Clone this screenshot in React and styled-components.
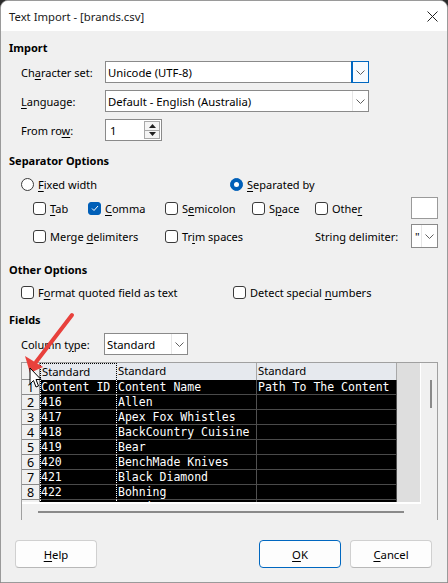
import React from "react";
import styled, { createGlobalStyle } from "styled-components";

const GlobalStyle = createGlobalStyle`
  html, body {
    margin: 0;
    padding: 0;
    background: #2b2b2b;
  }
  * { box-sizing: border-box; }
`;

const UI = `"Noto Sans", "Liberation Sans", sans-serif`;
const MONO = `"DejaVu Sans Mono", "Liberation Mono", monospace`;

const Window = styled.div`
  position: relative;
  width: 448px;
  height: 583px;
  background: #f0f0f0;
  border: 1px solid #9a9a9a;
  border-radius: 8px 8px 0 0;
  overflow: hidden;
  font-family: ${UI};
  font-size: 11px;
  color: #000;
  display: flex;
  flex-direction: column;
`;

const TitleBar = styled.div`
  height: 30px;
  background: #fff;
  display: flex;
  align-items: center;
  justify-content: space-between;
  padding: 0 9px 0 8px;
  font-size: 11.3px;
  color: #1a1a1a;
`;

const Body = styled.div`
  flex: 1;
  display: flex;
  flex-direction: column;
  padding: 0 9px 0 8px;
`;

const SectionTitle = styled.div`
  height: 20px;
  line-height: 20px;
  font-weight: bold;
  margin-top: ${(p) => p.$top || 0}px;
`;

const Indent = styled.div`
  padding-left: ${(p) => p.$left || 12}px;
  margin-top: ${(p) => p.$top || 0}px;
`;

const FormRow = styled.div`
  display: flex;
  align-items: center;
  height: 22px;
  margin-top: ${(p) => p.$top || 0}px;
`;

const Label = styled.span`
  width: ${(p) => p.$w || 84}px;
  flex-shrink: 0;
  white-space: nowrap;
`;

const Mn = styled.span`
  text-decoration: underline;
  text-underline-offset: 2px;
`;

const Combo = styled.div`
  width: ${(p) => p.$w}px;
  height: ${(p) => p.$h || 22}px;
  background: #fff;
  border: 1px solid #8a8a8a;
  display: flex;
  align-items: stretch;
`;

const ComboText = styled.div`
  flex: 1;
  padding-left: ${(p) => p.$pad ?? 2}px;
  display: flex;
  align-items: center;
  white-space: nowrap;
  overflow: hidden;
  font-size: 11.3px;
`;

const DropButton = styled.div`
  width: 16px;
  display: flex;
  align-items: center;
  justify-content: center;
  border-left: 1px solid ${(p) => (p.$focused ? "#0067c0" : "#e6e6e6")};
  outline: ${(p) => (p.$focused ? "1px solid #0067c0" : "none")};
  background: ${(p) => (p.$focused ? "#f7fbff" : "#fff")};
`;

const Chevron = () => (
  <svg width="9" height="5" viewBox="0 0 9 5">
    <path d="M0.5 0.5 L4.5 4.5 L8.5 0.5" fill="none" stroke="#606060" strokeWidth="1" />
  </svg>
);

const SpinBox = styled.div`
  width: 57px;
  height: 22px;
  background: #fff;
  border: 1px solid #8a8a8a;
  display: flex;
`;

const SpinButtons = styled.div`
  width: 16px;
  margin: 1px 1px 1px 0;
  display: flex;
  flex-direction: column;
`;

const SpinHalf = styled.div`
  flex: 1;
  border: 1px solid #a8a8a8;
  border-top-width: ${(p) => (p.$down ? 0 : 1)}px;
  background: #f4f4f4;
  display: flex;
  align-items: center;
  justify-content: center;
`;

const Tri = ({ down }) => (
  <svg width="7" height="4" viewBox="0 0 7 4">
    <path d={down ? "M0 0 L7 0 L3.5 4 Z" : "M0 4 L7 4 L3.5 0 Z"} fill="#202020" />
  </svg>
);

const Grid = styled.div`
  display: grid;
  grid-template-columns: ${(p) => p.$cols};
  align-items: center;
  height: ${(p) => p.$h || 20}px;
  margin-top: ${(p) => p.$top || 0}px;
  padding-left: ${(p) => p.$left || 0}px;
`;

const Option = styled.label`
  display: flex;
  align-items: center;
  gap: 4px;
  white-space: nowrap;
`;

const Box = styled.span`
  width: 13px;
  height: 13px;
  border-radius: 3px;
  border: 1px solid ${(p) => (p.$checked ? "#005fb8" : "#3a3a3a")};
  background: ${(p) => (p.$checked ? "#005fb8" : "#fff")};
  display: inline-flex;
  align-items: center;
  justify-content: center;
  flex-shrink: 0;
`;

const Round = styled.span`
  width: 13px;
  height: 13px;
  border-radius: 50%;
  border: 1px solid ${(p) => (p.$checked ? "#005fb8" : "#3a3a3a")};
  background: ${(p) => (p.$checked ? "#005fb8" : "#fff")};
  display: inline-flex;
  align-items: center;
  justify-content: center;
  flex-shrink: 0;
  &::after {
    content: "";
    display: ${(p) => (p.$checked ? "block" : "none")};
    width: 5px;
    height: 5px;
    border-radius: 50%;
    background: #fff;
  }
`;

const Check = ({ checked, children }) => (
  <Option>
    <Box $checked={checked}>
      {checked && (
        <svg width="8" height="7" viewBox="0 0 8 7">
          <path d="M1 3.5 L3 5.5 L7 1" fill="none" stroke="#fff" strokeWidth="1" />
        </svg>
      )}
    </Box>
    <span>{children}</span>
  </Option>
);

const Radio = ({ checked, children }) => (
  <Option>
    <Round $checked={checked} />
    <span>{children}</span>
  </Option>
);

const Entry = styled.div`
  width: 27px;
  height: ${(p) => p.$h || 22}px;
  background: #fff;
  border: 1px solid #9a9a9a;
`;

/* preview grid */
const PreviewFrame = styled.div`
  margin: 7px 0 0 12px;
  width: 417px;
  height: 158px;
  border: 1px solid #a0a0a0;
  border-bottom: none;
  display: flex;
  flex-direction: column;
`;

const PreviewTop = styled.div`
  display: flex;
  height: 141px;
`;

const Viewport = styled.div`
  width: 399px;
  background: #dedede;
  border-right: 1px solid #fff;
  border-bottom: 2px solid #fff;
  overflow: hidden;
`;

const VScroll = styled.div`
  flex: 1;
  display: flex;
  justify-content: center;
  padding-top: 17px;
`;

const VThumb = styled.div`
  width: 2px;
  height: 28px;
  background: #8a8a8a;
  margin-left: 3px;
`;

const HScroll = styled.div`
  flex: 1;
  padding: 7px 0 0 16px;
`;

const HThumb = styled.div`
  width: 366px;
  height: 2px;
  background: #8a8a8a;
`;

const Table = styled.div`
  display: grid;
  grid-template-columns: 18px 77px 140px 140px;
  grid-auto-rows: 15px;
  grid-template-rows: 17px;
  width: 375px;
`;

const Corner = styled.div`
  background: #f0f0f0;
  border-right: 1px solid #8a8a8a;
  border-bottom: 1px solid #8a8a8a;
`;

const RowNum = styled.div`
  background: #f0f0f0;
  border-right: 1px solid #8a8a8a;
  border-bottom: 1px solid #8a8a8a;
  font-size: 12.5px;
  line-height: 14px;
  padding-top: 1px;
  text-align: center;
  overflow: hidden;
`;

const HeadCell = styled.div`
  background: #e6e9ee;
  border-top: ${(p) => (p.$focus ? "1px dotted #000" : "none")};
  border-left: ${(p) => (p.$focus ? "1px dotted #000" : "none")};
  border-right: 1px ${(p) => (p.$focus ? "dotted #000" : "solid #a8a8a8")};
  padding-left: 1px;
  font-size: 11.3px;
  line-height: 16px;
  white-space: nowrap;
  overflow: hidden;
`;

const DataCell = styled.div`
  background: #000;
  color: #fff;
  font-family: ${MONO};
  font-size: 11.5px;
  line-height: 14px;
  white-space: nowrap;
  overflow: hidden;
  border-bottom: 1px solid #4a4a4a;
  border-right: 1px ${(p) => (p.$focus ? "dotted #fff" : "solid #505050")};
  border-left: ${(p) => (p.$focus ? "1px dotted #fff" : "none")};
  padding-left: ${(p) => (p.$focus ? 0 : 1)}px;
`;

const Footer = styled.div`
  display: flex;
  align-items: center;
  margin-top: 20px;
  padding-left: 6px;
  height: 28px;
`;

const Button = styled.button`
  width: 82px;
  height: 28px;
  font-family: ${UI};
  font-size: 11.3px;
  color: #000;
  background: #fdfdfd;
  border: 1px solid ${(p) => (p.$default ? "#0067c0" : "#d0d0d0")};
  border-bottom-color: ${(p) => (p.$default ? "#0067c0" : "#b8b8b8")};
  border-radius: 4px;
  padding: 0;
  margin-left: ${(p) => p.$left || 0}px;
`;

const Overlay = styled.svg`
  position: absolute;
  left: -1px;
  top: -1px;
  pointer-events: none;
`;

const rows = [
  ["Content ID", "Content Name", "Path To The Content"],
  ["416", "Allen", ""],
  ["417", "Apex Fox Whistles", ""],
  ["418", "BackCountry Cuisine", ""],
  ["419", "Bear", ""],
  ["420", "BenchMade Knives", ""],
  ["421", "Black Diamond", ""],
  ["422", "Bohning", ""],
  ["423", "Buzzie", ""],
];

export default function App() {
  return (
    <>
      <GlobalStyle />
      <Window>
        <TitleBar>
          <span>Text Import - [brands.csv]</span>
          <svg width="11" height="11" viewBox="0 0 11 11">
            <path d="M0.5 0.5 L10.5 10.5 M10.5 0.5 L0.5 10.5" stroke="#222" strokeWidth="1" />
          </svg>
        </TitleBar>
        <Body>
          <SectionTitle $top={7}>Import</SectionTitle>
          <Indent>
            <FormRow $top={3}>
              <Label>
                Ch<Mn>a</Mn>racter set:
              </Label>
              <Combo $w={264}>
                <ComboText>Unicode (UTF-8)</ComboText>
                <DropButton $focused>
                  <Chevron />
                </DropButton>
              </Combo>
            </FormRow>
            <FormRow $top={7}>
              <Label>
                <Mn>L</Mn>anguage:
              </Label>
              <Combo $w={264}>
                <ComboText>Default - English (Australia)</ComboText>
                <DropButton>
                  <Chevron />
                </DropButton>
              </Combo>
            </FormRow>
            <FormRow $top={7}>
              <Label>
                From ro<Mn>w</Mn>:
              </Label>
              <SpinBox>
                <ComboText $pad={4}>1</ComboText>
                <SpinButtons>
                  <SpinHalf>
                    <Tri />
                  </SpinHalf>
                  <SpinHalf $down>
                    <Tri down />
                  </SpinHalf>
                </SpinButtons>
              </SpinBox>
            </FormRow>
          </Indent>

          <SectionTitle $top={10}>Separator Options</SectionTitle>
          <Grid $cols="209px auto" $left={12} $top={3}>
            <Radio>
              <Mn>F</Mn>ixed width
            </Radio>
            <Radio checked>
              <Mn>S</Mn>eparated by
            </Radio>
          </Grid>
          <Grid $cols="55px 77px 87px 63px 96px 27px" $left={24} $top={3} $h={22}>
            <Check>
              <Mn>T</Mn>ab
            </Check>
            <Check checked>
              <Mn>C</Mn>omma
            </Check>
            <Check>
              S<Mn>e</Mn>micolon
            </Check>
            <Check>
              S<Mn>p</Mn>ace
            </Check>
            <Check>
              Othe<Mn>r</Mn>
            </Check>
            <Entry />
          </Grid>
          <Grid $cols="132px 150px 96px 27px" $left={24} $top={5} $h={24}>
            <Check>
              Merge <Mn>d</Mn>elimiters
            </Check>
            <Check>
              Tr<Mn>i</Mn>m spaces
            </Check>
            <span>
              Strin<Mn>g</Mn> delimiter:
            </span>
            <Combo $w={27} $h={24}>
              <ComboText $pad={3}>"</ComboText>
              <DropButton>
                <Chevron />
              </DropButton>
            </Combo>
          </Grid>

          <SectionTitle $top={12}>Other Options</SectionTitle>
          <Grid $cols="212px auto" $left={12} $top={2}>
            <Check>
              F<Mn>o</Mn>rmat quoted field as text
            </Check>
            <Check>
              Detect special <Mn>n</Mn>umbers
            </Check>
          </Grid>

          <SectionTitle $top={8}>Fields</SectionTitle>
          <Indent $top={3}>
            <FormRow>
              <Label $w={83}>
                Column t<Mn>y</Mn>pe:
              </Label>
              <Combo $w={84}>
                <ComboText>Standard</ComboText>
                <DropButton>
                  <Chevron />
                </DropButton>
              </Combo>
            </FormRow>
          </Indent>

          <PreviewFrame>
            <PreviewTop>
              <Viewport>
                <Table>
                  <Corner />
                  <HeadCell $focus>Standard</HeadCell>
                  <HeadCell>Standard</HeadCell>
                  <HeadCell>Standard</HeadCell>
                  {rows.map((r, i) => (
                    <React.Fragment key={i}>
                      <RowNum>{i + 1}</RowNum>
                      <DataCell $focus>{r[0]}</DataCell>
                      <DataCell>{r[1]}</DataCell>
                      <DataCell>{r[2]}</DataCell>
                    </React.Fragment>
                  ))}
                </Table>
              </Viewport>
              <VScroll>
                <VThumb />
              </VScroll>
            </PreviewTop>
            <HScroll>
              <HThumb />
            </HScroll>
          </PreviewFrame>

          <Footer>
            <Button>
              <Mn>H</Mn>elp
            </Button>
            <Button $default $left={162}>
              <Mn>O</Mn>K
            </Button>
            <Button $left={9}>
              <Mn>C</Mn>ancel
            </Button>
          </Footer>
        </Body>

        <Overlay width="448" height="583" viewBox="0 0 448 583">
          <line x1="72" y1="315" x2="36" y2="362" stroke="#e8413c" strokeWidth="4" strokeLinecap="round" />
          <path d="M30 373 L25 356 L43 367 Z" fill="#e8413c" />
          <path
            d="M30 368 L30 384 L33.5 380.5 L36 387 L38.5 386 L36 379.5 L41 379.5 Z"
            fill="#fff"
            stroke="#000"
            strokeWidth="1"
            strokeLinejoin="round"
          />
        </Overlay>
      </Window>
    </>
  );
}
